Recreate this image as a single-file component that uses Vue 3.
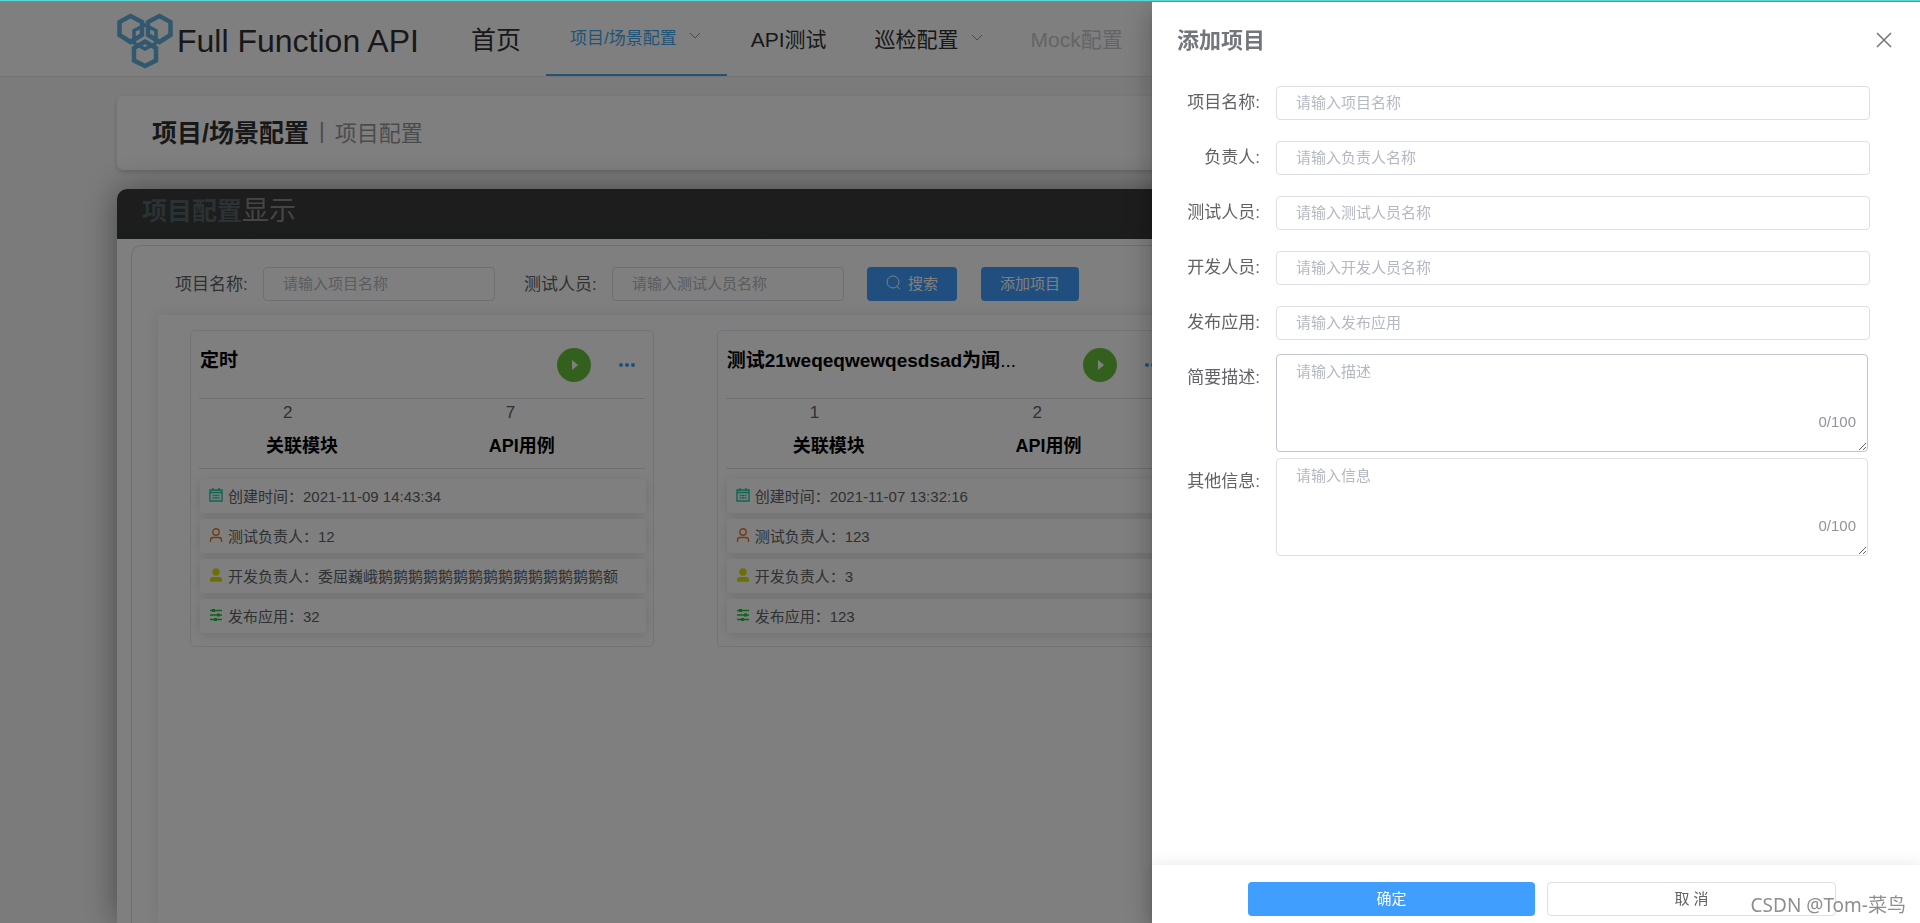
<script setup>
import { ref } from 'vue'

const nameQuery = ref('')
const testerQuery = ref('')

const projects = [
  {
    title: '定时', more: '', modules: 2, cases: 7,
    created: '2021-11-09 14:43:34', tester: '12',
    developer: '委屈巍峨鹅鹅鹅鹅鹅鹅鹅鹅鹅鹅鹅鹅鹅鹅鹅额', app: '32'
  },
  {
    title: '测试21weqeqwewqesdsad为闻', more: '...', modules: 1, cases: 2,
    created: '2021-11-07 13:32:16', tester: '123', developer: '3', app: '123'
  }
]

const fields = ref([
  { id: 'name', label: '项目名称:', hint: '请输入项目名称', value: '' },
  { id: 'owner', label: '负责人:', hint: '请输入负责人名称', value: '' },
  { id: 'tester', label: '测试人员:', hint: '请输入测试人员名称', value: '' },
  { id: 'dev', label: '开发人员:', hint: '请输入开发人员名称', value: '' },
  { id: 'app', label: '发布应用:', hint: '请输入发布应用', value: '' }
])

const notes = ref([
  { id: 'desc', label: '简要描述:', hint: '请输入描述', value: '', active: true },
  { id: 'info', label: '其他信息:', hint: '请输入信息', value: '', active: false }
])
</script>

<template>
  <div class="page">
    <div class="progress"></div>

    <header class="topbar">
      <a class="brand" href="#">
        <svg class="logo" viewBox="0 0 56 56" fill="none" stroke="#62b0dc">
          <g stroke-width="4.500">
            <path d="M13.500 3 25 9v13L13.500 29 2.500 22V9z" />
            <path d="M42.500 3 53.500 9v13L42.500 29 31 22V9z" />
            <path d="M28 28.500 39 35v12.500L28 53 17 47.500V35z" />
          </g>
          <g stroke-width="3.500">
            <path d="M28 12 39 17.500v12.500L28 36 17 30V17.500z" />
          </g>
        </svg>
        <span>Full Function API</span>
      </a>
      <nav class="menu">
        <a class="home" href="#">首页</a>
        <a class="current" href="#">项目/场景配置
          <svg class="caret" viewBox="0 0 12 12"><path d="M1 3l5 5 5-5" /></svg>
        </a>
        <a href="#">API测试</a>
        <a href="#">巡检配置
          <svg class="caret" viewBox="0 0 12 12"><path d="M1 3l5 5 5-5" /></svg>
        </a>
        <a class="off" href="#">Mock配置</a>
      </nav>
    </header>

    <main class="content">
      <div class="crumbs"><strong>项目/场景配置</strong><i>|</i><span>项目配置</span></div>

      <section class="panel">
        <h2 class="panel-head"><b>项目配置</b>显示</h2>
        <div class="panel-body">
          <form class="search" @submit.prevent>
            <label for="q-name">项目名称:</label>
            <input id="q-name" v-model="nameQuery" class="box" placeholder="请输入项目名称" />
            <label for="q-tester" class="second">测试人员:</label>
            <input id="q-tester" v-model="testerQuery" class="box" placeholder="请输入测试人员名称" />
            <button class="btn primary find" type="submit">
              <svg viewBox="0 0 15 15"><circle cx="7" cy="7" r="6" /><path d="M11 11.500l3 2.500" /></svg>搜索
            </button>
            <button class="btn primary" type="button">添加项目</button>
          </form>

          <div class="cards">
            <article v-for="p in projects" :key="p.title" class="card">
              <div class="card-head">
                <h3>{{ p.title }}<span>{{ p.more }}</span></h3>
                <button class="play" type="button" aria-label="play">
                  <svg viewBox="0 0 34 34"><path d="M15 12v10l6-5z" /></svg>
                </button>
                <button class="dots" type="button" aria-label="more">
                  <svg viewBox="0 0 16 6"><circle cx="2" cy="3" r="2" /><circle cx="8" cy="3" r="2" /><circle cx="14" cy="3" r="2" /></svg>
                </button>
              </div>
              <div class="stats">
                <div><span>{{ p.modules }}</span><b>关联模块</b></div>
                <div><span>{{ p.cases }}</span><b>API用例</b></div>
              </div>
              <ul class="facts">
                <li>
                  <svg viewBox="0 0 14 14" class="teal"><path d="M1 2h12v11H1zM1 4.500h12M4 0v3M10 0v3" /><path d="M3.500 7.500h7M3.500 10h7" stroke-dasharray="2 .500" /></svg>
                  创建时间：{{ p.created }}
                </li>
                <li>
                  <svg viewBox="0 0 14 14" class="orange"><circle cx="7" cy="4" r="3.200" /><path d="M1.500 14V12q0-2.500 2.500-2.500h6q2.500 0 2.500 2.500v2" /></svg>
                  测试负责人：{{ p.tester }}
                </li>
                <li>
                  <svg viewBox="0 0 14 14" class="yellow"><circle cx="7" cy="4" r="3.700" /><path d="M1 13.800V11.500q0-2.500 2.500-2.500h7q2.500 0 2.500 2.500v2.300z" /></svg>
                  开发负责人：{{ p.developer }}
                </li>
                <li>
                  <svg viewBox="0 0 14 14" class="green"><path d="M1 2.500h12M1 7h12M1 11.500h12" /><path d="M4.500 1v3M9.500 5.500v3M6.500 10v3" stroke-width="3" /></svg>
                  发布应用：{{ p.app }}
                </li>
              </ul>
            </article>
          </div>
        </div>
      </section>
    </main>

    <div class="mask">
      <aside class="drawer" role="dialog" aria-labelledby="drawer-title">
        <div class="drawer-head">
          <h2 id="drawer-title">添加项目</h2>
          <button type="button" aria-label="close">
            <svg viewBox="0 0 16 16"><path d="M1 1l14 14M15 1L1 15" /></svg>
          </button>
        </div>
        <form class="entry" @submit.prevent>
          <div v-for="f in fields" :key="f.id" class="row">
            <label :for="f.id">{{ f.label }}</label>
            <input :id="f.id" v-model="f.value" class="box" :placeholder="f.hint" />
          </div>
          <div v-for="n in notes" :key="n.id" class="row note">
            <label :for="n.id">{{ n.label }}</label>
            <div class="area">
              <textarea :id="n.id" v-model="n.value" maxlength="100" :class="{ active: n.active }" :placeholder="n.hint"></textarea>
              <span>{{ n.value.length }}/100</span>
            </div>
          </div>
        </form>
        <footer class="actions">
          <button class="btn primary" type="button">确定</button>
          <button class="btn plain" type="button">取 消</button>
        </footer>
        <span class="mark">CSDN @Tom-菜鸟</span>
      </aside>
    </div>
  </div>
</template>

<style>
body {
  overflow: hidden;
}
</style>

<style scoped>
* {
  box-sizing: border-box;
}
.page {
  height: 100vh;
  display: flex;
  flex-direction: column;
  overflow: hidden;
  background: #f7f7f7;
  color: #606266;
  font-family: "Liberation Sans", "Noto Sans CJK SC", sans-serif;
  font-size: 15px;
}
h2,
h3,
ul {
  margin: 0;
  padding: 0;
}
a {
  color: inherit;
  text-decoration: none;
}
button,
input,
textarea {
  font: inherit;
}
button {
  padding: 0;
  border: 0;
  background: none;
}
.progress {
  position: fixed;
  inset: 0 0 auto;
  z-index: 3;
  height: 2px;
  background: linear-gradient(#58d5d5 50%, #3fa3a5 50%);
}
.topbar {
  flex: none;
  height: 77px;
  display: flex;
  padding-left: 117px;
  background: #fff;
  border-bottom: 1px solid #e6e6e6;
}
.brand {
  display: flex;
  align-items: center;
  gap: 4px;
  padding-top: 6px;
  margin-right: 28px;
  color: #303133;
  font-size: 32px;
}
.logo {
  width: 56px;
  height: 56px;
}
.menu {
  display: flex;
  color: #303133;
  font-size: 21px;
}
.menu a {
  display: flex;
  align-items: center;
  gap: 12px;
  padding: 0 24px;
  height: 76px;
}
.menu a.home {
  padding-right: 25px;
  font-size: 25px;
}
.menu a.current {
  padding-bottom: 2px;
  color: #3fa9ed;
  border-bottom: 2px solid #3fa9ed;
  font-size: 17px;
}
.menu a.current {
  padding-right: 26px;
}
.menu a.off {
  color: #c8c9cc;
}
.caret {
  width: 12px;
  height: 12px;
  fill: none;
  stroke: #909399;
}
.content {
  flex: 1;
  display: flex;
  flex-direction: column;
  gap: 19px;
  padding: 19px 117px 0;
}
.crumbs {
  flex: none;
  height: 74px;
  display: flex;
  align-items: center;
  gap: 10px;
  padding: 0 35px 4px;
  border-radius: 6px;
  background: #fff;
  box-shadow: 0 2px 5px rgba(0, 0, 0, 0.18);
  color: #97989b;
  font-size: 22px;
}
.crumbs strong {
  color: #303133;
  font-size: 25px;
}
.crumbs i {
  font-style: normal;
}
.panel {
  flex: 1;
  display: flex;
  flex-direction: column;
  border-radius: 10px 10px 0 0;
  background: #fff;
  box-shadow: 0 0 34px rgba(0, 0, 0, 0.42);
}
.panel-head {
  height: 50px;
  padding-left: 25px;
  border-radius: 10px 10px 0 0;
  background: linear-gradient(#3a3a3a, #373a38);
  color: #8a8a8a;
  font-size: 27px;
  font-weight: 400;
  line-height: 44px;
}
.panel-head b {
  color: #566468;
  font-size: 25px;
}
.panel-body {
  flex: 1;
  display: flex;
  flex-direction: column;
  margin: 6px 13px 0 14px;
  border: 1px solid #dcdfe6;
  border-bottom: 0;
  border-radius: 10px 10px 0 0;
}
.search {
  display: flex;
  align-items: center;
  padding: 21px 43px 14px;
}
.search label {
  flex: none;
  width: 88px;
  padding-bottom: 3px;
  font-size: 17px;
}
.search label.second {
  margin-left: 29px;
}
.search .box {
  width: 232px;
}
.box {
  height: 34px;
  min-width: 0;
  padding: 0 19px 2px;
  border: 1px solid #dcdfe6;
  border-radius: 4px;
  background: #fff;
  outline: 0;
}
.box::placeholder,
textarea::placeholder {
  color: #b4b8c0;
  opacity: 1;
}
.btn {
  height: 34px;
  padding: 0 19px 3px;
  border-radius: 4px;
}
.primary {
  background: #409eff;
  color: #fff;
}
.find {
  display: flex;
  align-items: center;
  gap: 7px;
  margin: 0 24px 0 23px;
}
.find svg {
  width: 15px;
  height: 15px;
  fill: none;
  stroke: #fff;
}
.cards {
  flex: 1;
  display: grid;
  grid-template-columns: repeat(3, 1fr);
  align-items: start;
  gap: 63px;
  margin: 0 27px 0 26px;
  padding: 15px 55px 0 32px;
  box-shadow: 0 0 16px rgba(0, 0, 0, 0.1);
}
.card {
  min-width: 0;
  padding: 0 8px 13px;
  border: 1px solid #e4e7ed;
  border-radius: 5px;
}
.card-head {
  height: 68px;
  display: flex;
  align-items: center;
  border-bottom: 1px solid #dcdfe6;
}
.card-head h3 {
  flex: 1;
  padding: 0 0 13px 1px;
  color: #000;
  font-size: 19px;
  white-space: nowrap;
}
.card-head h3 span {
  font-weight: 400;
}
.play {
  width: 34px;
  height: 34px;
  border-radius: 50%;
  background: #67c23a;
}
.play svg {
  display: block;
  fill: #fff;
}
.dots {
  margin: 0 10px 0 28px;
}
.dots svg {
  display: block;
  width: 16px;
  height: 6px;
  fill: #409eff;
}
.stats {
  height: 70px;
  display: grid;
  grid-template-columns: 1fr 1fr;
  border-bottom: 1px solid #dcdfe6;
}
.stats div {
  display: flex;
  flex-direction: column;
  padding-left: 67px;
}
.stats span {
  padding-left: 17px;
  font-size: 17px;
  line-height: 27px;
}
.stats b {
  color: #000;
  font-size: 18px;
  line-height: 40px;
}
.facts {
  display: grid;
  gap: 6px;
  margin: 10px -1px 0 1px;
  list-style: none;
}
.facts li {
  height: 34px;
  display: flex;
  align-items: center;
  gap: 5px;
  padding: 0 0 2px 9px;
  border-radius: 4px;
  background: #fff;
  box-shadow: 0 2px 12px rgba(0, 0, 0, 0.12);
  white-space: nowrap;
}
.facts svg {
  width: 14px;
  height: 14px;
  fill: none;
  stroke-width: 1.4;
}
.teal {
  stroke: #20c8a8;
}
.orange {
  stroke: #e07830;
}
.facts .yellow {
  fill: #dcdc10;
}
.green {
  stroke: #1fc52f;
}
.mask {
  position: fixed;
  inset: 0;
  z-index: 2;
  display: flex;
  justify-content: flex-end;
  background: rgba(0, 0, 0, 0.5);
}
.drawer {
  position: relative;
  width: 40%;
  display: flex;
  flex-direction: column;
  background: #fff;
  box-shadow: 0 8px 10px -5px rgba(0, 0, 0, 0.2), 0 16px 24px 2px rgba(0, 0, 0, 0.14), 0 6px 30px 5px rgba(0, 0, 0, 0.12);
}
.drawer-head {
  display: flex;
  align-items: center;
  justify-content: space-between;
  height: 86px;
  padding: 0 28px 7px 25px;
}
.drawer-head h2 {
  padding-bottom: 4px;
  color: #72767b;
  font-size: 22px;
}
.drawer-head svg {
  display: block;
  width: 16px;
  height: 16px;
  fill: none;
  stroke: #72767b;
  stroke-width: 1.5;
}
.entry {
  flex: 1;
  padding-right: 50px;
}
.row {
  display: flex;
  margin-bottom: 21px;
}
.row label {
  flex: none;
  width: 124px;
  padding-right: 16px;
  font-size: 17px;
  line-height: 34px;
  text-align: right;
}
.row .box {
  flex: 1;
}
.row:not(.note) {
  height: 34px;
}
.note {
  margin: -7px 2px 13px 0;
}
.note label {
  padding-top: 7px;
}
.area {
  position: relative;
  flex: 1;
  height: 98px;
}
.area textarea {
  display: block;
  width: 100%;
  height: 98px;
  padding: 5px 19px;
  border: 1px solid #dcdfe6;
  border-radius: 4px;
  outline: 0;
  line-height: 23px;
}
.area textarea.active {
  border-color: #c0c4cc;
}
.area span {
  position: absolute;
  right: 12px;
  bottom: 20px;
  color: #909399;
  line-height: 20px;
}
.actions {
  display: flex;
  gap: 12px;
  padding: 17px 84px 7px 96px;
  box-shadow: 0 0 16px rgba(0, 0, 0, 0.1);
}
.actions .btn {
  flex: 1;
}
.plain {
  border: 1px solid #dcdfe6;
  background: #fff;
  color: #606266;
}
.mark {
  position: absolute;
  right: 14px;
  bottom: 5px;
  color: #8e8e8e;
  font-family: "Noto Sans", "Noto Sans CJK SC", sans-serif;
  font-size: 19px;
  text-shadow: 1px 1px 0 #fff;
}
</style>
